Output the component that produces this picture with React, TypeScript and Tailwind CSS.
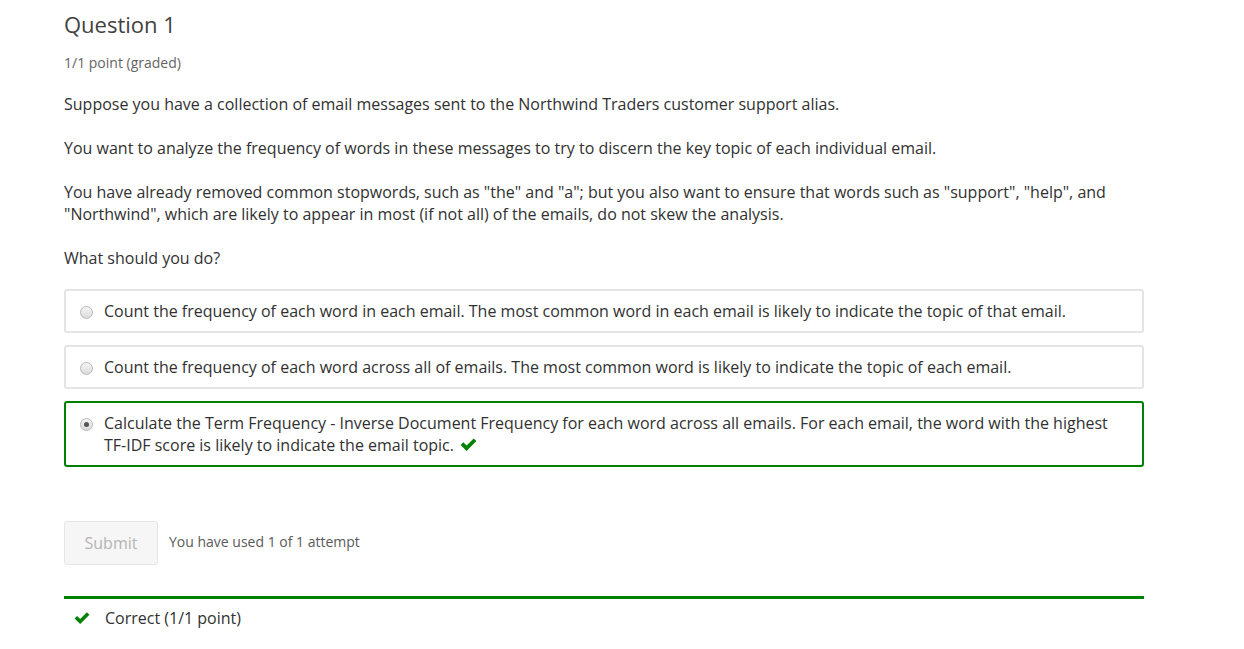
import React from 'react'

const options = [
  'Count the frequency of each word in each email. The most common word in each email is likely to indicate the topic of that email.',
  'Count the frequency of each word across all of emails. The most common word is likely to indicate the topic of each email.',
  'Calculate the Term Frequency - Inverse Document Frequency for each word across all emails. For each email, the word with the highest TF-IDF score is likely to indicate the email topic.',
]

function Check({ className = '' }: { className?: string }) {
  return (
    <svg viewBox="0 0 16 14" className={className} fill="#008100">
      <path d="M0.6 7.4 L3.1 4.9 L6.2 8 L12.9 1.3 L15.4 3.8 L6.2 13 Z" />
    </svg>
  )
}

function Radio({ checked }: { checked: boolean }) {
  return (
    <span className="mt-[6px] flex h-[13px] w-[13px] shrink-0 items-center justify-center rounded-full border border-[#b8b8b8] bg-gradient-to-b from-[#f4f4f4] to-[#dcdcdc]">
      {checked && <span className="h-[5px] w-[5px] rounded-full bg-[#555]" />}
    </span>
  )
}

export default function App() {
  return (
    <div className="min-h-screen bg-white font-['Open_Sans',sans-serif] text-[#313131]">
      <div className="ml-[64px] w-[1080px] pt-[8px]">
        {/* Header */}
        <h3 className="text-[22px] leading-[32px] text-[#414141]">Question 1</h3>
        <div className="mt-[14px] text-[14px] leading-[18px] text-[#646464]">1/1 point (graded)</div>

        {/* Prompt */}
        <div className="mt-[21px] text-[16px] leading-[22px]">
          <p>Suppose you have a collection of email messages sent to the Northwind Traders customer support alias.</p>
          <p className="mt-[22px]">
            You want to analyze the frequency of words in these messages to try to discern the key topic of each individual email.
          </p>
          <p className="mt-[22px] pr-[30px]">
            You have already removed common stopwords, such as "the" and "a"; but you also want to ensure that words such as "support", "help", and "Northwind", which are likely to appear in most (if not all) of the emails, do not skew the analysis.
          </p>
          <p className="mt-[22px]">What should you do?</p>
        </div>

        {/* Options */}
        <div className="mt-[20px] flex flex-col gap-[12px]">
          {options.map((o, i) => {
            const sel = i === 2
            return (
              <label
                key={i}
                className={`flex gap-[11px] rounded-[3px] border-2 px-[14px] py-[9px] text-[16px] leading-[22px] ${
                  sel ? 'border-[#008100]' : 'border-[#e4e4e4]'
                }`}
              >
                <Radio checked={sel} />
                <span className="pr-[20px]">
                  {o}
                  {sel && <Check className="ml-[6px] inline-block h-[15px] w-[17px] align-[-1px]" />}
                </span>
              </label>
            )
          })}
        </div>

        {/* Submit */}
        <div className="mt-[54px] flex items-center gap-[11px]">
          <button className="h-[44px] w-[94px] rounded-[3px] border border-[#e6e6e6] bg-[#f6f6f6] text-[16px] text-[#b4b4b4]">
            Submit
          </button>
          <span className="mb-[3px] text-[14px] text-[#5a5a5a]">You have used 1 of 1 attempt</span>
        </div>

        {/* Result */}
        <div className="mt-[31px] border-t-[3px] border-[#008100] pt-[8px]">
          <div className="flex items-center gap-[15px] pl-[10px] text-[16px] leading-[22px]">
            <Check className="h-[14px] w-[16px]" />
            <span>Correct (1/1 point)</span>
          </div>
        </div>
      </div>
    </div>
  )
}
